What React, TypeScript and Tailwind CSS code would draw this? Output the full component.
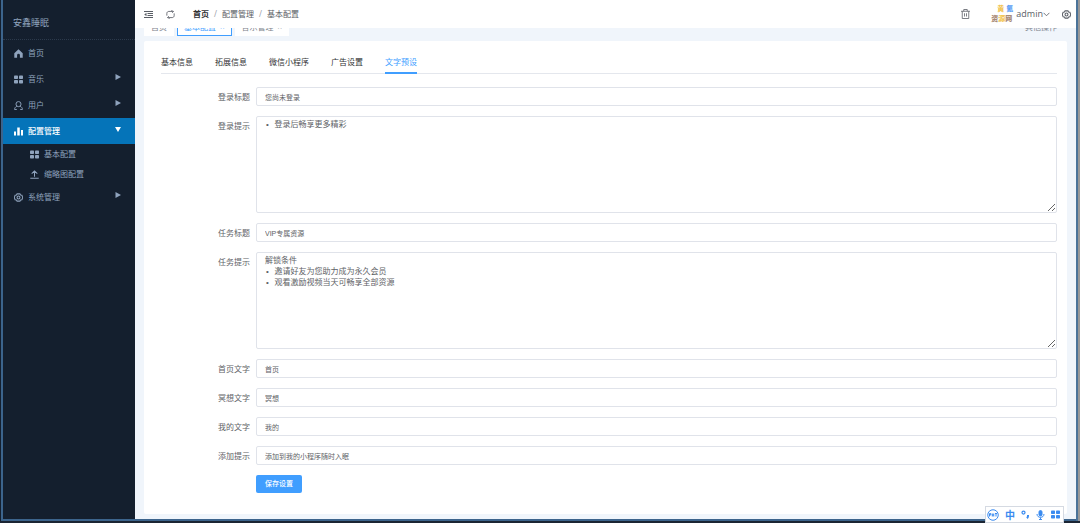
import type { ReactNode } from "react";
import { clsx } from "clsx";

const HomeIcon = () => (
  <svg viewBox="0 0 16 16" className="h-[9px] w-[9px]" fill="currentColor">
    <path d="M8 0.5 0.5 7.500V15.500h5v-4.500a2.500 2.500 0 0 1 5 0v4.500h5V7.500z" />
  </svg>
);

const GridIcon = () => (
  <svg viewBox="0 0 18 18" className="h-[9px] w-[9px]" fill="currentColor">
    <rect x="0" y="1" width="8" height="7" rx="1.500" />
    <rect x="10" y="1" width="8" height="7" rx="1.500" />
    <rect x="0" y="10" width="8" height="7" rx="1.500" />
    <rect x="10" y="10" width="8" height="7" rx="1.500" />
  </svg>
);

const UserIcon = () => (
  <svg viewBox="0 0 16 16" className="h-[9px] w-[9px]" fill="none" stroke="currentColor" strokeWidth="1.700">
    <circle cx="8" cy="5.500" r="4.500" />
    <path d="M5 9.500C2.500 10.500 1 12.500 1 15h4M11 9.500c2.500 1 4 3 4 5.500h-4" />
  </svg>
);

const ChartIcon = () => (
  <svg viewBox="0 0 18 18" className="h-[9px] w-[9px]" fill="currentColor">
    <rect x="0" y="9" width="4" height="8" />
    <rect x="6.500" y="1" width="5" height="16" />
    <rect x="14" y="6" width="4" height="11" />
  </svg>
);

const UploadIcon = () => (
  <svg viewBox="0 0 16 16" className="h-[9px] w-[9px]" fill="none" stroke="currentColor" strokeWidth="1.800">
    <path d="M8 12V1.500M3 6.500l5-5 5 5M0.500 14.500h15" />
  </svg>
);

const GearIcon = () => (
  <svg viewBox="0 0 16 16" className="h-[9px] w-[9px]" fill="none" stroke="currentColor" strokeWidth="1.900">
    <path d="M5.500 1.500h5l1.200 2 2.300.3 1.500 4.200L14 12.200l-2.300.3-1.200 2h-5l-1.200-2-2.300-.3L.500 8 2 3.800l2.300-.3z" />
    <circle cx="8" cy="8" r="2.600" />
  </svg>
);

const MenuIcon = () => (
  <svg viewBox="0 0 18 18" className="h-[9px] w-[9px]" fill="none" stroke="currentColor" strokeWidth="2">
    <path d="M0 3h18M7 7h11M7 11h11M0 15h18" />
    <path d="M5 5.500v7L0.500 9z" fill="currentColor" stroke="none" />
  </svg>
);

const RefreshIcon = () => (
  <svg viewBox="0 0 16 16" className="h-[9px] w-[9px]" fill="none" stroke="currentColor" strokeWidth="1.500">
    <path d="M1.500 10V6c0-2 1.500-3.500 3.500-3.500h8.500M10.500 0v2.500M13.500 2.500 11 5" />
    <path d="M14.500 6v4c0 2-1.500 3.500-3.500 3.500H2.500M5.500 16v-2.500M2.500 13.500 5 11" />
  </svg>
);

const TrashIcon = () => (
  <svg viewBox="0 0 18 20" className="h-[10px] w-[9px]" fill="none" stroke="currentColor" strokeWidth="1.600">
    <path d="M0 4.500h18M5.500 4.500V1h7v3.500M2.500 4.500V19h13V4.500M7 8.500v6.500M11 8.500v6.500" />
  </svg>
);

type MenuItem = {
  label: string;
  icon: ReactNode;
  expandable?: boolean;
  children?: { label: string; icon: ReactNode }[];
};

const menu: MenuItem[] = [
  { label: "首页", icon: <HomeIcon /> },
  { label: "音乐", icon: <GridIcon />, expandable: true },
  { label: "用户", icon: <UserIcon />, expandable: true },
  {
    label: "配置管理",
    icon: <ChartIcon />,
    expandable: true,
    children: [
      { label: "基本配置", icon: <GridIcon /> },
      { label: "缩略图配置", icon: <UploadIcon /> },
    ],
  },
  { label: "系统管理", icon: <GearIcon />, expandable: true },
];

const tabs = ["基本信息", "拓展信息", "微信小程序", "广告设置", "文字预设"];

const fields = [
  { id: "login-title", label: "登录标题", value: "您尚未登录" },
  { id: "login-tip", label: "登录提示", value: "• 登录后畅享更多精彩", multiline: true },
  { id: "task-title", label: "任务标题", value: "VIP专属资源" },
  {
    id: "task-tip",
    label: "任务提示",
    value: "解锁条件\n• 邀请好友为您助力成为永久会员\n• 观看激励视频当天可畅享全部资源",
    multiline: true,
  },
  { id: "home-text", label: "首页文字", value: "首页" },
  { id: "meditation-text", label: "冥想文字", value: "冥想" },
  { id: "mine-text", label: "我的文字", value: "我的" },
  { id: "add-tip", label: "添加提示", value: "添加到我的小程序随时入眠" },
];

const Sidebar = () => (
  <aside className="w-[132px] shrink-0 bg-[#141f2e] text-[#8fa3bd]">
    <h1 className="flex h-10 items-center border-b border-dotted border-[#2c3a4c] px-[10px] pt-[6px] text-[9px]">
      安鑫睡眠
    </h1>
    <nav>
      {menu.map((item) => (
        <div key={item.label}>
          <a
            href="#"
            className={clsx(
              "flex h-[26px] items-center gap-[5px] pr-[14px] pl-[11px]",
              item.children && "bg-[#0574b9] font-medium text-white"
            )}
          >
            {item.icon}
            <span className="flex-1">{item.label}</span>
            {item.expandable && (
              <svg viewBox="0 0 6 6" className="mb-1 h-[6px] w-[6px]" fill="currentColor">
                <path d={item.children ? "M0 1h6L3 6z" : "M0.500 0v6L6 3z"} />
              </svg>
            )}
          </a>
          {item.children?.map((child) => (
            <a key={child.label} href="#" className="flex h-5 items-center gap-[5px] pl-[27px]">
              {child.icon}
              {child.label}
            </a>
          ))}
        </div>
      ))}
    </nav>
  </aside>
);

const Header = () => (
  <header className="flex h-7 items-center bg-white pr-[5px] pl-[9px] text-[#5a5e66]">
    <button type="button" aria-label="菜单">
      <MenuIcon />
    </button>
    <button type="button" aria-label="刷新" className="ml-[13px]">
      <RefreshIcon />
    </button>
    <nav className="ml-[18px] flex gap-[5px]">
      <a href="#" className="font-bold text-[#303133]">首页</a>
      <span className="text-[#a0a4ac]">/</span>
      <a href="#">配置管理</a>
      <span className="text-[#a0a4ac]">/</span>
      <span>基本配置</span>
    </nav>
    <button type="button" aria-label="清除" className="ml-auto">
      <TrashIcon />
    </button>
    <span className="ml-[21px] flex w-[22px] flex-col text-[7px] leading-[10px] font-black whitespace-nowrap">
      <span className="flex justify-end gap-[2px] text-[#f2c65a]">
        黄<span className="text-[#5ea0f5]">氪</span>
      </span>
      <span className="text-[#a98b78]">
        资<span className="text-[#f2c65a]">源</span>网
      </span>
    </span>
    <button type="button" className="ml-[3px] flex items-center font-['Open_Sans',sans-serif] text-[9px]">
      admin
      <svg viewBox="0 0 8 6" className="h-[5px] w-[7px]" fill="none" stroke="currentColor">
        <path d="M0.500 1 4 4.500 7.500 1" />
      </svg>
    </button>
    <button type="button" aria-label="设置" className="ml-3">
      <GearIcon />
    </button>
  </header>
);

const PageTabs = () => (
  <div className="flex h-2 items-end gap-[3px] overflow-hidden px-[9px] text-[#7d828c]">
    <a href="#" className="flex h-4 items-center bg-white px-[7px] pb-[2px]">首页</a>
    <a href="#" className="flex h-4 items-center gap-1 border border-[#409eff] bg-white px-[6px] pb-[2px] text-[#409eff]">
      基本配置<span>×</span>
    </a>
    <a href="#" className="flex h-4 items-center gap-1 bg-white px-[7px] pb-[2px]">
      音乐管理<span>×</span>
    </a>
    <button type="button" className="mr-[10px] ml-auto flex h-4 items-center pb-[2px]">其他操作</button>
  </div>
);

const SettingsForm = () => (
  <form className="flex flex-col gap-[10px] pt-[13px]">
    {fields.map((field) => (
      <div key={field.id} className="flex">
        <label htmlFor={field.id} className="w-[95px] shrink-0 pr-[6px] text-right leading-[19px] text-[#606266]">
          {field.label}
        </label>
        {field.multiline ? (
          <textarea
            id={field.id}
            defaultValue={field.value}
            className="h-[97px] min-w-0 flex-1 resize-y rounded-xs border border-[#e0e3ea] bg-white px-2 py-[2px] font-['Liberation_Mono','Noto_Sans_CJK_SC',monospace] text-[8px] leading-[11px] text-[#606266] outline-none"
          />
        ) : (
          <input
            id={field.id}
            type="text"
            defaultValue={field.value}
            className="h-[19px] min-w-0 flex-1 rounded-xs border border-[#e0e3ea] bg-white px-2 font-['Liberation_Sans','Noto_Sans_CJK_SC',sans-serif] text-[7px] text-[#606266] outline-none"
          />
        )}
      </div>
    ))}
    <button
      type="button"
      className="ml-[95px] h-[18px] self-start rounded-xs bg-[#409eff] px-[9px] text-[7px] font-medium text-white"
    >
      保存设置
    </button>
  </form>
);

const InputMethodBar = () => (
  <div className="absolute right-4 -bottom-[2px] flex h-[17px] items-center gap-[6px] border border-[#d5dae2] bg-white pr-[3px] pl-[1px] text-[#3a8bf0]">
    <svg viewBox="0 0 24 24" className="h-3 w-3" fill="none" stroke="currentColor" strokeWidth="2">
      <circle cx="12" cy="12" r="10.500" />
      <path d="M5 15V9h2.500v3H5M10.500 15V9M10.500 12h3M13.500 9v6M16 9h4M18 9v6" />
    </svg>
    <span className="text-[10px] font-bold">中</span>
    <svg viewBox="0 0 18 18" className="h-[9px] w-[9px]" fill="none" stroke="currentColor" strokeWidth="2.500">
      <circle cx="5" cy="5" r="3" />
      <path d="M14 10v2c0 2-.5 3-2 4.500" strokeWidth="4" />
    </svg>
    <svg viewBox="0 0 18 20" className="h-[10px] w-[9px]" fill="none" stroke="currentColor" strokeWidth="2">
      <rect x="6" y="1" width="6" height="11" rx="3" fill="currentColor" />
      <path d="M2 8c0 9 14 9 14 0M9 15v4M6 19h6" />
    </svg>
    <GridIcon />
  </div>
);

const App = () => {
  return (
    <div className="relative flex min-h-screen border-b-2 border-[#1b2533] bg-[#141f2e] font-['Noto_Sans','Noto_Sans_CJK_SC',sans-serif] text-[8px] leading-3">
      <div className="w-[3px] shrink-0 border-r-2 border-[#3c648c]" />
      <div className="flex min-w-0 flex-1 border-b-2 border-[#3c648c]">
        <Sidebar />
        <div className="flex min-w-0 flex-1 flex-col bg-[#f0f5fb]">
          <Header />
          <PageTabs />
          <main className="mx-[9px] my-[5px] flex-1 rounded-xs bg-white pt-3 pr-[10px] pb-5 pl-[17px]">
            <div role="tablist" className="flex gap-[22px] border-b border-[#e4e7ed]">
              {tabs.map((tab) => (
                <button
                  key={tab}
                  type="button"
                  role="tab"
                  aria-selected={tab === "文字预设"}
                  className={clsx(
                    "-mb-px h-[21px] border-b-2 pb-[2px]",
                    tab === "文字预设" ? "border-[#409eff] text-[#409eff]" : "border-transparent text-[#303133]"
                  )}
                >
                  {tab}
                </button>
              ))}
            </div>
            <SettingsForm />
          </main>
        </div>
      </div>
      <div className="w-1 shrink-0 border-l-2 border-[#4a7399] bg-[#989898]" />
      <InputMethodBar />
    </div>
  );
};

export default App;
